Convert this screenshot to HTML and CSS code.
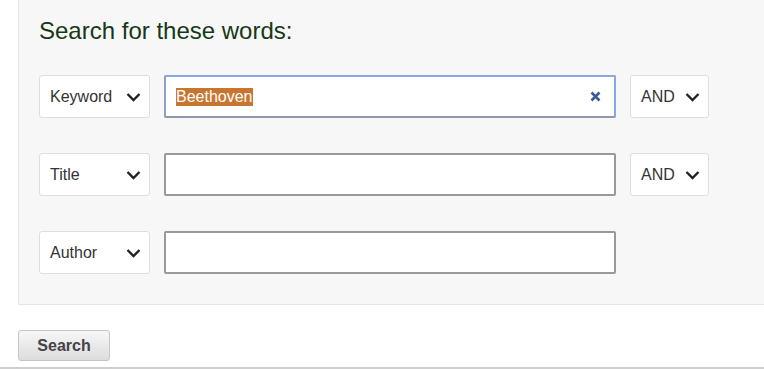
FILE: index.html
```html
<!DOCTYPE html>
<html lang="en">
<head>
  <meta charset="UTF-8">
  <title>Advanced Search</title>
  <link rel="stylesheet" href="styles.css">
</head>
<body>
  <div class="search-panel">
    <h2 class="panel-title">Search for these words:</h2>

    <div class="search-row">
      <div class="picker field-picker">
        <span>Keyword</span>
        <svg class="chevron" width="15" height="10" viewBox="0 0 15 10"><path d="M1.5 2 L7.5 8 L13.5 2" /></svg>
      </div>
      <div class="term-box focused">
        <span class="selected-text">Beethoven</span>
        <svg class="clear-icon" width="11" height="11" viewBox="0 0 11 11"><path d="M1.5 1.5 L9.5 9.5 M9.5 1.5 L1.5 9.5" /></svg>
      </div>
      <div class="picker bool-picker">
        <span>AND</span>
        <svg class="chevron" width="15" height="10" viewBox="0 0 15 10"><path d="M1.5 2 L7.5 8 L13.5 2" /></svg>
      </div>
    </div>

    <div class="search-row">
      <div class="picker field-picker">
        <span>Title</span>
        <svg class="chevron" width="15" height="10" viewBox="0 0 15 10"><path d="M1.5 2 L7.5 8 L13.5 2" /></svg>
      </div>
      <div class="term-box"></div>
      <div class="picker bool-picker">
        <span>AND</span>
        <svg class="chevron" width="15" height="10" viewBox="0 0 15 10"><path d="M1.5 2 L7.5 8 L13.5 2" /></svg>
      </div>
    </div>

    <div class="search-row">
      <div class="picker field-picker">
        <span>Author</span>
        <svg class="chevron" width="15" height="10" viewBox="0 0 15 10"><path d="M1.5 2 L7.5 8 L13.5 2" /></svg>
      </div>
      <div class="term-box"></div>
    </div>
  </div>

  <div class="actions">
    <button class="search-button">Search</button>
  </div>
  <div class="footer-rule"></div>
</body>
</html>
```

FILE: styles.css
```css
* {
  margin: 0;
  padding: 0;
  box-sizing: border-box;
}

body {
  font-family: "Liberation Sans", Arial, sans-serif;
  background: #fff;
  color: #333;
  overflow: hidden;
}

.search-panel {
  margin-left: 18px;
  background: #f7f7f7;
  border: 1px solid #e6e6e6;
  border-top: none;
  border-right: none;
  padding: 17px 0 30px 20px;
}

.panel-title {
  font-size: 24px;
  font-weight: normal;
  line-height: 27px;
  color: #163916;
  margin-bottom: 31px;
}

.search-row {
  display: flex;
  gap: 14px;
  height: 43px;
  margin-bottom: 35px;
}

.search-row:last-child {
  margin-bottom: 0;
}

.picker {
  display: flex;
  align-items: center;
  justify-content: space-between;
  background: #fff;
  border: 1px solid #dedede;
  border-radius: 3px;
  padding: 0 8px 0 10px;
  font-size: 16px;
  color: #333;
}

.field-picker {
  width: 111px;
}

.bool-picker {
  width: 79px;
}

.chevron path {
  fill: none;
  stroke: #222;
  stroke-width: 2.4;
}

.term-box {
  display: flex;
  align-items: center;
  justify-content: space-between;
  width: 452px;
  background: #fff;
  border: 2px solid #999;
  border-radius: 2px;
  padding: 0 13px 0 10px;
}

.term-box.focused {
  border-color: #8aa9e2 #8aa9e2 #8f97a8 #8f9fc4;
}

.selected-text {
  background: #c8762f;
  color: #fff;
  font-size: 16px;
  line-height: 18px;
}

.clear-icon path {
  fill: none;
  stroke: #3c5a96;
  stroke-width: 2.6;
}

.actions {
  padding: 25px 0 0 18px;
}

.search-button {
  width: 92px;
  height: 31px;
  font-family: "Liberation Sans", Arial, sans-serif;
  font-size: 16px;
  font-weight: bold;
  color: #444;
  background: linear-gradient(#f7f7f7, #dcdcdc);
  border: 1px solid #c6c6c6;
  border-radius: 3px;
}

.footer-rule {
  margin-top: 6px;
  height: 2px;
  background: #cfcfcf;
}
```
